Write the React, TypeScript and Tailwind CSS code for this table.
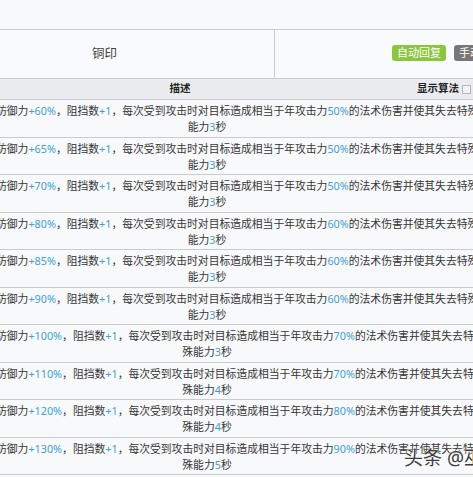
import * as React from 'react';

const rows: { def: number; atk: number; sec: number }[] = [
  { def: 60, atk: 50, sec: 3 },
  { def: 65, atk: 50, sec: 3 },
  { def: 70, atk: 50, sec: 3 },
  { def: 80, atk: 60, sec: 3 },
  { def: 85, atk: 60, sec: 3 },
  { def: 90, atk: 60, sec: 3 },
  { def: 100, atk: 70, sec: 3 },
  { def: 110, atk: 70, sec: 4 },
  { def: 120, atk: 80, sec: 4 },
  { def: 130, atk: 90, sec: 5 },
];

function Hi({ children }: { children: React.ReactNode }) {
  return <span className="text-[#3f9fd6]">{children}</span>;
}

function SkillRow({ def, atk, sec }: { def: number; atk: number; sec: number }) {
  const wide = def >= 100;
  return (
    <div className="h-[37.5px] border-b border-[#c8ccd1] bg-[#f8f9fa] pt-[3px] text-[10.8px] leading-[16px] text-[#363636]">
      <div className="-ml-[4px] whitespace-nowrap">
        防御力<Hi>+{def}%</Hi>，阻挡数<Hi>+1</Hi>，每次受到攻击时对目标造成相当于年攻击力<Hi>{atk}%</Hi>
        的法术伤害并使其失去特{wide ? '' : '殊'}
      </div>
      <div className="w-[414px] text-center whitespace-nowrap">
        {wide ? '殊' : ''}能力<Hi>{sec}</Hi>秒
      </div>
    </div>
  );
}

export default function App() {
  return (
    <div
      className="relative h-[477px] w-[473px] overflow-hidden bg-[#f8f9fa]"
      style={{ fontFamily: '"Noto Sans", "Noto Sans CJK SC", sans-serif' }}
    >
      <div className="h-[30px] border-b border-[#c8ccd1] bg-[#f8f9fa]" />

      <div className="flex h-[49px] border-b border-[#c8ccd1] bg-[#f9fafb]">
        <div className="flex w-[275px] shrink-0 items-center justify-center border-r border-[#c8ccd1] pr-[65px] text-[12.5px] text-[#404040]">
          铜印
        </div>
        <div className="flex min-w-0 flex-1 items-center gap-[8px] whitespace-nowrap pb-[2px] pl-[117px]">
          <span className="shrink-0 rounded-[3px] bg-[#8cc63e] px-[5px] text-[11px] leading-[16px] text-white">
            自动回复
          </span>
          <span className="shrink-0 rounded-[3px] bg-[#777777] px-[5px] text-[11px] leading-[16px] text-white">
            手动触发
          </span>
        </div>
      </div>

      <div className="flex h-[21px] items-center border-b border-[#c8ccd1] bg-[#eaecf0] text-[10.5px] font-bold text-[#222]">
        <div className="w-[360px] text-center">描述</div>
        <div className="ml-auto flex items-center gap-[3px] pr-[2px]">
          显示算法
          <span className="inline-block h-[9px] w-[9px] border border-[#b5b5b5] bg-[#f4f4f4]" />
        </div>
      </div>

      {rows.map((r) => (
        <SkillRow key={r.def} {...r} />
      ))}

      <div
        className="absolute left-[404px] top-[444px] whitespace-nowrap text-[19px] text-[#3c3c3c]"
        style={{ textShadow: '0 0 2px #fff, 0 0 2px #fff' }}
      >
        头条 @巫
      </div>
    </div>
  );
}
